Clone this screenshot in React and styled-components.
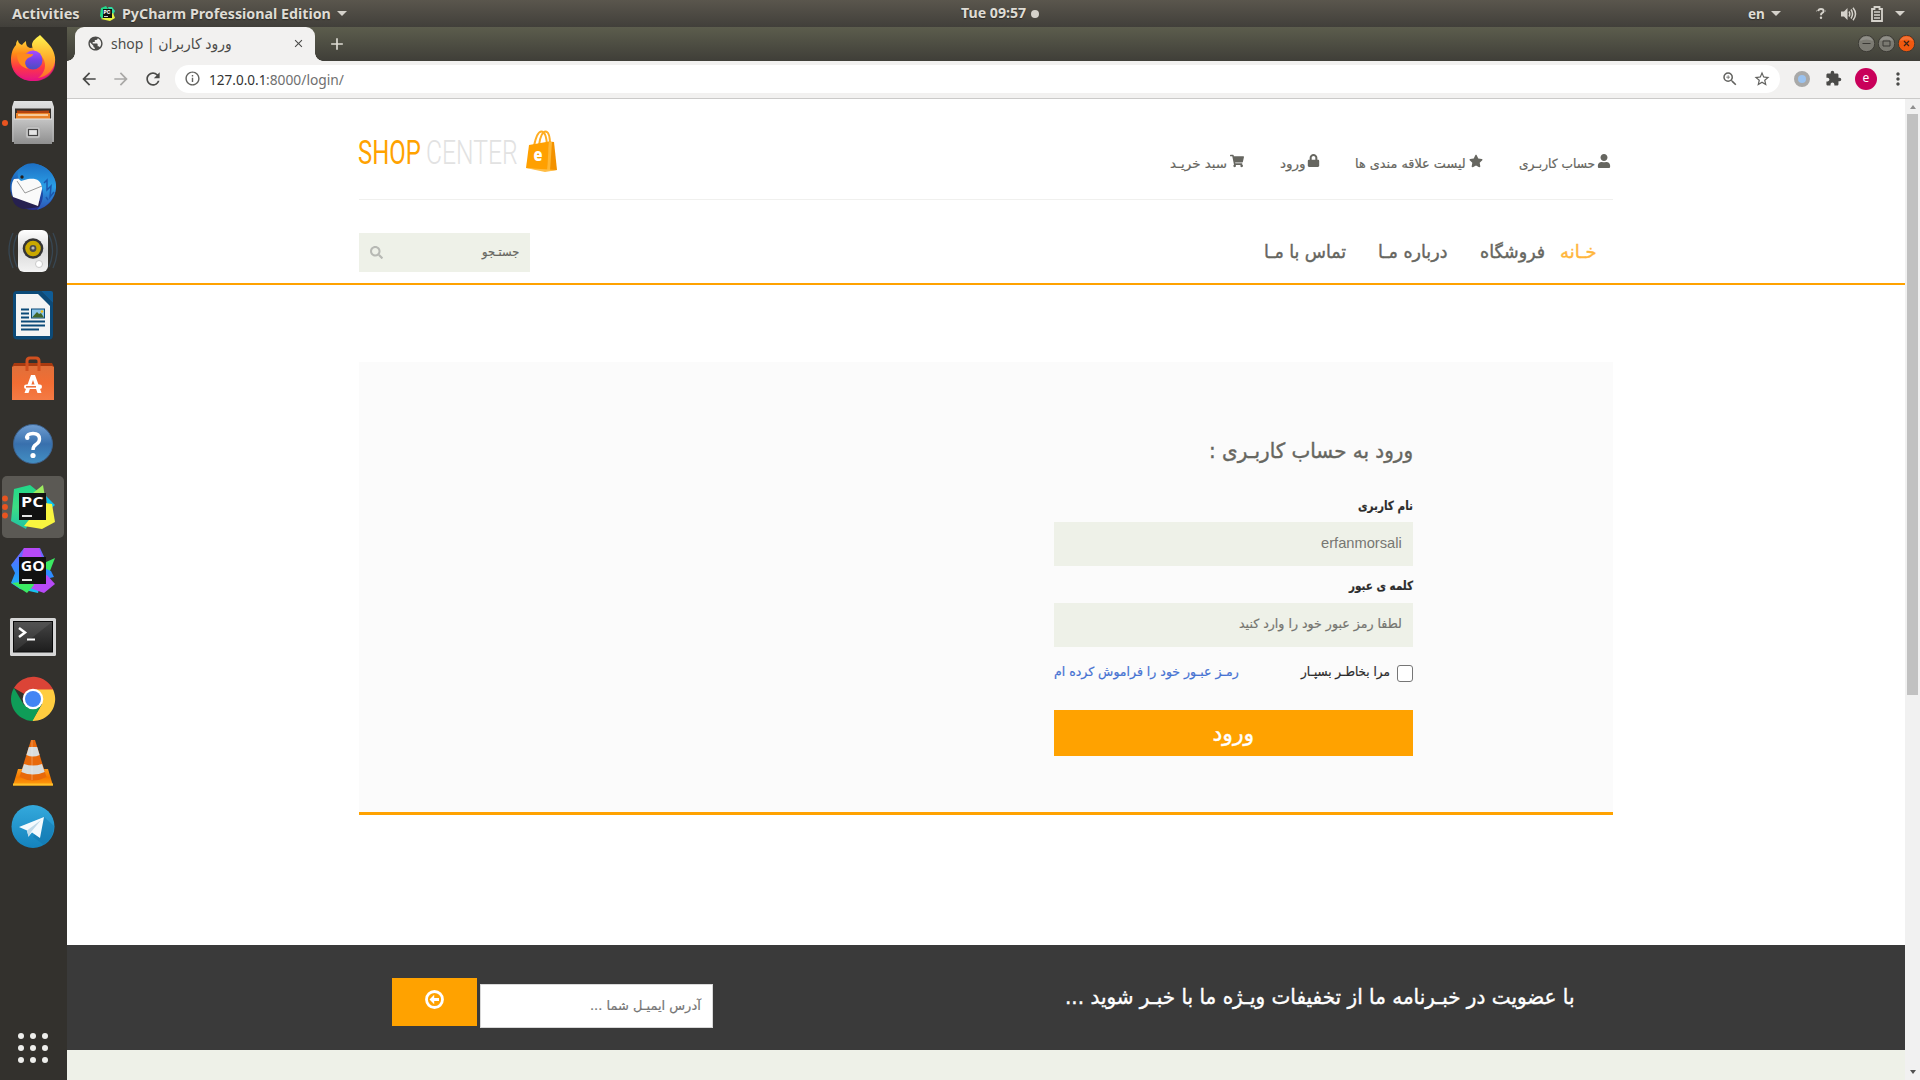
import React, { useLayoutEffect, useRef, useState } from "react";
import styled, { createGlobalStyle } from "styled-components";
import { FaUser, FaStar, FaLock, FaShoppingCart, FaSearch } from "react-icons/fa";
import { MdArrowBack, MdArrowForward, MdRefresh, MdInfoOutline, MdZoomIn, MdStarBorder, MdExtension, MdMoreVert, MdPublic, MdClose, MdAdd } from "react-icons/md";

const ORANGE = "#ffa200";
const UBUNTU = `"Noto Sans", "Open Sans", "DejaVu Sans", sans-serif`;
const PERSIAN = `"DejaVu Sans", sans-serif`;

const GlobalStyle = createGlobalStyle`
  * { box-sizing: border-box; }
  html, body { margin: 0; padding: 0; overflow: hidden; background: #fff; }
  svg { display: block; flex: none; }
`;

/* ---------- text set to a fixed measure ---------- */

const Measure = styled.span`
  display: block;
  flex: none;
  width: ${(p) => p.$w}px;
  height: ${(p) => p.$lh || 20}px;
  line-height: ${(p) => p.$lh || 20}px;
  font-family: ${(p) => p.$font || PERSIAN};
  font-size: ${(p) => p.$size}px;
  font-weight: ${(p) => p.$weight || 400};
  color: ${(p) => p.$color || "#666660"};
  direction: ltr;
  margin: ${(p) => p.$m || 0};
  text-shadow: ${(p) => p.$shadow || "none"};
  -webkit-text-stroke: ${(p) => (p.$font ? 0 : p.$size > 16 ? 0.4 : 0.2)}px currentColor;
`;
const Inner = styled.span`
  display: inline-block;
  white-space: pre;
  transform-origin: 0 50%;
  direction: ${(p) => (p.$ltr ? "ltr" : "rtl")};
`;

function Fit({ children, w, size, lh, font, weight, color, m, ltr, shadow }) {
  const ref = useRef(null);
  const [scale, setScale] = useState(1);
  useLayoutEffect(() => {
    const natural = ref.current.offsetWidth;
    if (natural) setScale(w / natural);
  }, [w, children]);
  return (
    <Measure $w={w} $size={size} $lh={lh} $font={font} $weight={weight} $color={color} $m={m} $shadow={shadow}>
      <Inner ref={ref} $ltr={ltr} style={{ transform: `scaleX(${scale})` }}>{children}</Inner>
    </Measure>
  );
}

/* ---------- desktop shell ---------- */

const Desktop = styled.div`
  width: 1920px;
  height: 1080px;
  display: flex;
  flex-direction: column;
  overflow: hidden;
`;
const TopBar = styled.div`
  height: 27px;
  flex: none;
  display: grid;
  grid-template-columns: 961px 1fr 172px;
  background: linear-gradient(#5a564d, #413f3a);
`;
const BarGroup = styled.div`
  display: flex;
  align-items: center;
  padding-left: ${(p) => p.$pl || 0}px;
`;
const Caret = styled.i`
  border: 5px solid transparent;
  border-top-color: #d5d2cb;
  border-bottom: 0;
  margin-left: ${(p) => p.$ml}px;
`;
const Dot = styled.i`
  width: 8px;
  height: 8px;
  border-radius: 50%;
  background: #d5d2cb;
  margin-left: 5px;
`;
const Workspace = styled.div`
  display: flex;
  flex: 1;
  min-height: 0;
`;
const Dock = styled.nav`
  width: 67px;
  flex: none;
  background: #33312d;
  display: flex;
  flex-direction: column;
`;
const Slot = styled.div`
  height: 64px;
  flex: none;
`;
const AppsGrid = styled.div`
  margin: auto 0 17px 18px;
  display: grid;
  grid-template-columns: repeat(3, 6px);
  gap: 6px;
`;
const GridDot = styled.i`
  width: 6px;
  height: 6px;
  border-radius: 50%;
  background: #eeeeec;
`;

/* ---------- browser ---------- */

const Browser = styled.div`
  width: 1853px;
  display: flex;
  flex-direction: column;
  background: #fff;
`;
const TabStrip = styled.div`
  height: 34px;
  flex: none;
  display: flex;
  align-items: flex-end;
  background: linear-gradient(#5c5d4d, #3f3e38);
`;
const TabFoot = styled.i`
  width: 8px;
  height: 8px;
  background: radial-gradient(circle at ${(p) => p.$at}, transparent 7.5px, #f2f1f0 8px);
`;
const Tab = styled.div`
  width: 240px;
  height: 34px;
  border-radius: 9px 9px 0 0;
  background: #f2f1f0;
  display: flex;
  align-items: center;
  padding: 0 0 1px 12px;
`;
const TabClose = styled.span`
  margin-left: 60px;
  color: #4a4a48;
  stroke: currentColor;
`;
const NewTab = styled.span`
  align-self: center;
  margin-left: 4px;
  color: #dedcd4;
`;
const WindowButtons = styled.div`
  margin-left: auto;
  align-self: center;
  display: flex;
  gap: 3px;
  padding: 0 5px 1px 0;
`;
const Toolbar = styled.div`
  height: 38px;
  flex: none;
  display: flex;
  align-items: center;
  background: #f2f1f0;
  border-bottom: 1px solid #cbcac9;
  color: #4a4a48;
  padding: 0 0 2px 12px;
`;
const Tool = styled.span`
  margin-left: ${(p) => p.$ml || 0}px;
  color: ${(p) => p.$color || "inherit"};
`;
const Omnibox = styled.div`
  margin-left: 12px;
  width: 1605px;
  height: 28px;
  border-radius: 14px;
  background: #fff;
  display: flex;
  align-items: center;
  padding-left: 9px;
  color: #62625f;
`;
const Profile = styled.span`
  width: 22px;
  height: 22px;
  border-radius: 50%;
  background: #c9005a;
  color: #fff;
  margin-left: 13px;
  display: flex;
  justify-content: center;
  font: 12px/20px ${UBUNTU};
`;
const ExtensionDot = styled.span`
  width: 16px;
  height: 16px;
  border-radius: 50%;
  border: 4px solid #a9a9a8;
  background: #9bc3f0;
  margin-left: 14px;
`;
const Viewport = styled.div`
  flex: 1;
  min-height: 0;
  display: flex;
`;
const Scrollbar = styled.div`
  width: 15px;
  background: #f1f1f1;
  display: flex;
  flex-direction: column;
  align-items: center;
  padding: 6px 0;
`;
const Thumb = styled.div`
  width: 11px;
  height: 581px;
  margin: 5px 0 auto;
  background: #c1c1c1;
`;
const ScrollArrow = styled.i`
  border: 3.5px solid transparent;
  ${(p) => (p.$up ? "border-bottom: 4px solid #8f8f8f; border-top: 0;" : "border-top: 4px solid #505050; border-bottom: 0;")}
`;

/* ---------- shop page ---------- */

const Page = styled.main`
  width: 1838px;
  display: flex;
  flex-direction: column;
  background: #fff;
`;
const Header = styled.header`
  height: 186px;
  flex: none;
  border-bottom: 2px solid ${ORANGE};
  padding: 0 292px;
`;
const HeaderTop = styled.div`
  height: 101px;
  border-bottom: 1px solid #f0f0ee;
  display: flex;
  justify-content: space-between;
`;
const Logo = styled.div`
  display: flex;
  align-items: flex-start;
  padding-top: 31px;
`;
const LinkRow = styled.div`
  display: flex;
  direction: rtl;
  padding: 55px 2px 0 0;
`;
const QuickLink = styled.a`
  display: flex;
  align-items: flex-start;
  color: #666660;
  margin-right: ${(p) => p.$gap || 0}px;
`;
const HeaderBottom = styled.div`
  display: flex;
  justify-content: space-between;
  padding-top: 33px;
`;
const Search = styled.div`
  width: 171px;
  height: 39px;
  background: #eef1e8;
  display: flex;
  align-items: center;
  justify-content: space-between;
  padding: 0 11px;
  color: #b7b9b4;
`;
const Menu = styled.nav`
  display: flex;
  direction: rtl;
  padding: 5px 16px 0 0;
`;
const Card = styled.section`
  margin: 77px 292px 0;
  height: 453px;
  flex: none;
  background: #fbfbfb;
  border-bottom: 3px solid ${ORANGE};
`;
const Form = styled.div`
  width: 359px;
  margin: 0 200px 0 auto;
  padding-top: 73px;
  display: flex;
  flex-direction: column;
  align-items: flex-start;
  direction: rtl;
`;
const Field = styled.div`
  width: 359px;
  height: 44px;
  background: #eef1e8;
  display: flex;
  align-items: center;
  padding-right: 11px;
`;
const Options = styled.div`
  width: 359px;
  height: 20px;
  margin-top: 15px;
  display: flex;
  align-items: center;
`;
const Checkbox = styled.span`
  width: 17px;
  height: 17px;
  margin: 2px 0 0 1px;
  border: 1px solid #767676;
  border-radius: 3px;
  background: #fff;
`;
const Submit = styled.div`
  width: 359px;
  height: 46px;
  margin-top: 28px;
  background: ${ORANGE};
  display: flex;
  justify-content: center;
`;
const Newsletter = styled.section`
  margin-top: 130px;
  height: 105px;
  flex: none;
  background: #3a3a3a;
  display: flex;
  padding-left: 325px;
`;
const SendButton = styled.div`
  width: 85px;
  height: 48px;
  margin-top: 33px;
  background: ${ORANGE};
  display: flex;
  justify-content: center;
  padding-top: 12px;
`;
const EmailField = styled.div`
  width: 233px;
  height: 44px;
  margin: 39px 353px 0 3px;
  background: #fff;
  border: 1px solid #d8d8d8;
  display: flex;
  direction: rtl;
  align-items: center;
  padding-right: 11px;
`;
const PageFoot = styled.div`
  flex: 1;
  background: #eef1e8;
`;

/* ---------- drawings ---------- */

const Bag = () => (
  <svg width="32" height="43" viewBox="0 0 32 43">
    <path d="M8 16 C10 6 13 1.500 15.500 1.500 C19 1.500 20.500 8 21 15 M13 15 C14 6 17 1.500 19.500 1.500 C23 1.500 24 8 24 15" fill="none" stroke="#ffad22" strokeWidth="2" />
    <path d="M3 15 L23 11.500 L22 41 L0 38Z" fill="#ffa000" />
    <path d="M23 11.500 L28 12 L31 40 L21 41Z" fill="#f39200" />
    <path d="M23 11.500 L26 12 L24 41 L21 41Z" fill="#ffb733" />
    <path d="M0 38 L22 39.500 L31 40 L19 42Z" fill="#ffbd45" />
    <text x="7.500" y="31" fontFamily="Open Sans" fontWeight="800" fontSize="18" fill="#fff" textLength="9" lengthAdjust="spacingAndGlyphs">e</text>
  </svg>
);

const CircleLeft = () => (
  <svg width="19" height="19" viewBox="0 0 19 19">
    <circle cx="9.500" cy="9.500" r="8" fill="none" stroke="#fff" strokeWidth="2.800" />
    <path d="M4.500 9.500 L9.200 4.800 V8 H14 V11 H9.200 V14.200Z" fill="#fff" />
  </svg>
);

const WinButton = ({ kind }) => (
  <svg width="17" height="17" viewBox="0 0 17 17">
    <circle cx="8.500" cy="8.500" r="8.200" fill={kind === "close" ? "#f1580f" : "#7b7a72"} stroke="#35342f" strokeWidth=".8" />
    <path d="M2 6 A7 7 0 0 1 15 6 Q8.500 3 2 6" fill="#fff" opacity=".16" />
    {kind === "min" && <path d="M4.500 8.500 H12.500" stroke="#3a3935" />}
    {kind === "max" && <path d="M5 6 H12 V11 H5Z" fill="none" stroke="#3a3935" />}
    {kind === "close" && <path d="M6 6 L11 11 M11 6 L6 11" stroke="#3a2417" strokeWidth="1.200" />}
  </svg>
);

const Volume = () => (
  <svg width="16" height="14" viewBox="0 0 16 14" fill="none" stroke="#d5d2cb" strokeWidth="1.500">
    <path d="M0 4.500 H3 L6.500 1 V13 L3 9.500 H0Z" fill="#d5d2cb" stroke="none" />
    <path d="M8 4.500 Q9.500 7 8 9.500 M10 2.500 Q13 7 10 11.500 M12 .8 Q17 7 12 13.200" />
  </svg>
);

const Battery = () => (
  <svg width="12" height="16" viewBox="0 0 12 16">
    <path d="M1 3 H3.500 V1 H8.500 V3 H11 V15 H1Z" fill="none" stroke="#d5d2cb" strokeWidth="1.800" />
    <path d="M3 6 H9 M3 9 H9 M3 12 H9" stroke="#d5d2cb" strokeWidth="1.500" />
  </svg>
);

const MiniPyCharm = () => (
  <svg width="15" height="15" viewBox="0 0 15 15">
    <path d="M1 2 L6 0 L8 3 L2 13 L0 10Z" fill="#21d789" />
    <path d="M8 1 L12 1 L15 5 L13 9 L10 7Z" fill="#2ed8a0" />
    <path d="M13 7 L15 12 L10 15 L1 13 L5 11Z" fill="#e9f53f" />
    <rect x="3" y="3" width="9" height="9" fill="#111" />
    <text x="3.600" y="7.800" fontFamily="Inter" fontWeight="800" fontSize="5" fill="#fff">PC</text>
    <path d="M4 10.500 H8" stroke="#fff" strokeWidth=".8" />
  </svg>
);

const HelpPerson = () => (
  <svg width="10" height="11" viewBox="0 0 10 11">
    <path d="M2.200 3.200 Q2.500 1 5 1 Q7.600 1 7.600 3.200 Q7.600 4.400 6 5.200 Q5 5.700 5 7.200" fill="none" stroke="#d5d2cb" strokeWidth="1.900" />
    <circle cx="5" cy="9.700" r="1.200" fill="#d5d2cb" />
    <path d="M0 3 H1 M9 3 H10" stroke="#a9a69f" />
  </svg>
);

const grad = (id, stops, vertical = true) => (
  <linearGradient id={id} x1="0" y1="0" x2={vertical ? 0 : 1} y2={vertical ? 1 : 0}>
    {stops.map((c, i) => <stop key={i} offset={i / (stops.length - 1)} stopColor={c} />)}
  </linearGradient>
);

const dockIcons = {
  firefox: (
    <>
      <defs>
        {grad("ffBody", ["#ffd43a", "#ff8a16", "#ff3647", "#e31587"])}
        {grad("ffTail", ["#fff44f", "#ffb22c", "#ff6a2a"])}
        {grad("ffCore", ["#a94dff", "#7542e5", "#4a4fc0"])}
      </defs>
      <path d="M16 18 C16 15 17 14 18 13 C18 16 20 17 22 18 C23 16 25 15 26 14 C26 18 27 20 30 21 L44 19 C49 22 55 26 55 34 C55 46 45 54 33 54 C20 54 11 45 11 33 C11 26 13 21 16 18Z" fill="url(#ffBody)" />
      <path d="M40 8 C44 12 48 16 51 20 C55 26 57 34 53 42 C50 48 44 51 38 51 C45 46 47 38 43 31 C39 26 32 24 32 18 C32 14 36 11 40 8Z" fill="url(#ffTail)" />
      <circle cx="33" cy="33" r="9.500" fill="url(#ffCore)" />
      <path d="M17 27 C23 24 27 28 33 27 C33 30 29 30 27 32 C24 35 25 38 28 42 C20 40 17 34 17 27Z" fill="#ff8a1c" />
      <path d="M12 38 C16 50 28 54 38 51 C48 49 54 42 55 35 C56 46 45 55 33 54 C22 54 14 48 12 38Z" fill="#e8147c" opacity=".65" />
    </>
  ),
  files: (
    <>
      <defs>{grad("fileFront", ["#c4c4c4", "#8f8f8f"])}{grad("fileTop", ["#e2e2e2", "#a2a2a2"])}</defs>
      <circle cx="5" cy="32" r="3" fill="#e95420" />
      <path d="M14 10 H52 L54 16 V51 H12 V16Z" fill="url(#fileTop)" />
      <rect x="15" y="17.500" width="36" height="11" fill="#36312d" />
      <path d="M17 19.500 L32 20 L49 19.500 V22 H17Z" fill="#b5430f" />
      <path d="M16 22 H50 V28 H16Z" fill="#e9822a" />
      <path d="M18 24 H48" stroke="#fff0d8" strokeWidth="1.300" />
      <rect x="14" y="28" width="38" height="25" fill="url(#fileFront)" />
      <path d="M14 28 H52" stroke="#e8e8e8" />
      <rect x="26" y="36" width="14" height="11" rx="2" fill="#c9c9c9" stroke="#aaa" strokeWidth=".6" />
      <rect x="28.500" y="38.500" width="9" height="6" fill="#e5e5e5" stroke="#444" strokeWidth="1.200" />
    </>
  ),
  thunderbird: (
    <>
      <defs>{grad("tb", ["#2b8ad8", "#1557b0", "#2a2f8f"])}{grad("tbWing", ["#1d6fc4", "#2a9fe6", "#2d53b5"])}</defs>
      <circle cx="33" cy="32" r="23" fill="url(#tb)" />
      <path d="M12 41 C12 48 17 53 24 54 L40 52 L40 46Z" fill="#262050" />
      <path d="M14 24 L40 22 L43 30 L38 51 L13 42 C11 35 11 28 14 24Z" fill="#fafafa" />
      <path d="M18 17 C22 9 31 6 40 10 C50 14 57 23 56 33 C55 43 48 52 37 55 C43 48 44 40 42 33 C41 24 35 23 28 24 L21 26 C18 24 17 21 18 17Z" fill="url(#tbWing)" />
      <path d="M17 26 L25 38 L42 31" fill="none" stroke="#999" strokeWidth="1" />
      <path d="M44 28 L47 25 L47 35 L51 31 L50 42 L54 37 M46 42 L48 45" stroke="#1c58ae" strokeWidth="1.500" fill="none" />
      <circle cx="22" cy="22" r="1.700" fill="#271e19" />
    </>
  ),
  rhythmbox: (
    <>
      <defs>{grad("rb", ["#ffffff", "#dadada", "#f3f3f3"])}</defs>
      <g fill="none" stroke="#384753" strokeWidth="1.300">
        <path d="M17 16 Q10 31 17 48 M13 14 Q5 31 13 49 M49 16 Q56 31 49 48 M53 14 Q61 31 53 49" />
      </g>
      <rect x="18" y="11" width="30" height="42" rx="6" fill="url(#rb)" />
      <circle cx="33" cy="29.500" r="10.300" fill="#343434" />
      <circle cx="33" cy="29.500" r="7.800" fill="#c9a800" />
      <circle cx="33" cy="29.500" r="3.400" fill="#4b4b4b" />
      <circle cx="33" cy="29" r="1.600" fill="#bbb" />
      <circle cx="39" cy="45" r="3.500" fill="#fff" stroke="#c9c9c9" />
    </>
  ),
  writer: (
    <>
      <path d="M17 8 H41 L53 20 V52 Q53 56.500 49 56.500 H18 Q13 56.500 13 52 V12 Q13 8 17 8Z" fill="#0c4a78" />
      <path d="M16 11 H38 L50 23 V53 H16Z" fill="#f4f4f4" />
      <path d="M41 8 H51 Q53 8 53 10 V20Z" fill="#0f5c96" />
      <path d="M21 26.500 H29 M21 30.500 H29 M21 34.500 H29 M21 38.500 H45 M21 42.500 H45 M21 46.500 H39" stroke="#0c4a78" strokeWidth="1.900" />
      <rect x="31.500" y="26" width="13" height="9" fill="#8bc4e8" stroke="#0c4a78" />
      <path d="M32 34.500 L37 29 L39 31 L41 30 L44 34.500Z" fill="#41662a" />
      <circle cx="42" cy="28.500" r="1.300" fill="#f5c211" />
    </>
  ),
  software: (
    <>
      <defs>{grad("sw", ["#e0703a", "#f26d33", "#f47b45"])}</defs>
      <path d="M14 16 H52 L54 20 H12Z" fill="#a83a10" />
      <path d="M12 20 L14 19 H52 L54 20 V53 H12Z" fill="url(#sw)" />
      <path d="M27 24 V14 Q27 11 30 11 H36 Q39 11 39 14 V24" fill="none" stroke="#d1501f" strokeWidth="3" />
      <path d="M24.500 46 L31 28 H35 L41.500 46 H37.500 L33 33 L28.500 46Z" fill="#fff" />
      <rect x="24" y="37.500" width="18" height="4.500" rx="2.200" fill="#fff" />
      <path d="M26 39.800 H36" stroke="#ed6b33" strokeWidth="1.500" />
    </>
  ),
  help: (
    <>
      <defs>{grad("hp", ["#6f9dd1", "#3870ad", "#4390c4"])}</defs>
      <circle cx="33" cy="33" r="19.500" fill="url(#hp)" stroke="#3d618c" strokeWidth="1" />
      <path d="M26.500 27 Q27 22.500 33 22.500 Q39.500 22.500 39.500 28 Q39.500 31.500 36 33.500 Q33 35.500 33 39" fill="none" stroke="#fff" strokeWidth="3.400" />
      <circle cx="27.300" cy="26.800" r="2.200" fill="#fff" />
      <circle cx="33" cy="44.500" r="2.600" fill="#fff" />
    </>
  ),
  pycharm: (
    <>
      <defs>{grad("pcg", ["#21d789", "#3ddc84", "#1fc2a5"])}</defs>
      <rect x="2" y="1" width="62" height="62" rx="5" fill="#5b5954" />
      <g fill="#e95420"><circle cx="5" cy="23.500" r="2.900" /><circle cx="5" cy="32" r="2.900" /><circle cx="5" cy="40.500" r="2.900" /></g>
      <path d="M14 14 L30 10 L40 18 L26 54 L11 46Z" fill="url(#pcg)" />
      <path d="M33 18 L43 10 L45 22Z" fill="#9dec60" />
      <path d="M46 21 L55 30 L48 36Z" fill="#07c3f2" />
      <path d="M45 28 L52 29 L55 47 L42 54 L24 51 L33 40Z" fill="#f8f540" />
      <rect x="19" y="18" width="27" height="27" fill="#111" />
      <text x="21" y="32" fontFamily="Open Sans" fontWeight="700" fontSize="15" fill="#fff" textLength="22.500" lengthAdjust="spacingAndGlyphs">PC</text>
      <path d="M22 41 H32" stroke="#fff" strokeWidth="1.800" />
    </>
  ),
  goland: (
    <>
      <defs>{grad("gog", ["#7d5cff", "#2e8bff", "#16c7ee"])}</defs>
      <path d="M24 9 L40 9 L46 22 L38 54 L20 50 L11 44 L15 34 L11 26Z" fill="url(#gog)" />
      <path d="M24 9 H39 L43 22 H21Z" fill="#b74af7" />
      <path d="M55 19 L48 37 L44 24Z" fill="#3bea62" />
      <path d="M46 30 L51 32 L54 38 L46 40Z" fill="#2e8bff" />
      <path d="M47 36 L55 45 L44 54 L30 49 L34 42Z" fill="#b74af7" />
      <path d="M12 44 L32 42 L34 46 L27 54Z" fill="#3bea62" />
      <rect x="19" y="18" width="27" height="27" fill="#111" />
      <text x="20.800" y="32" fontFamily="Open Sans" fontWeight="700" fontSize="15" fill="#fff" textLength="24" lengthAdjust="spacingAndGlyphs">GO</text>
      <path d="M22 41 H32" stroke="#fff" strokeWidth="1.800" />
    </>
  ),
  terminal: (
    <>
      <defs>{grad("tm", ["#454545", "#1d1d1d"])}</defs>
      <rect x="10" y="15" width="46" height="38" rx="1.500" fill="#d6d6d6" />
      <rect x="13.500" y="18.500" width="39" height="30.500" fill="url(#tm)" stroke="#0a0a0a" />
      <path d="M14 49 L52 19 V19 H14Z" fill="#fff" opacity=".08" />
      <path d="M19 25 L25 29.500 L19 34" fill="none" stroke="#fff" strokeWidth="2.500" />
      <path d="M27 36.500 H35" stroke="#fff" strokeWidth="2" />
    </>
  ),
  chrome: (
    <>
      <path d="M33 32 L13.950 21 A22 22 0 0 1 53.500 23.500 H33Z" fill="#db4437" />
      <path d="M33 22.500 H53 A22 22 0 0 1 32 54 L42 37Z" fill="#ffcd40" />
      <path d="M13.950 21 A22 22 0 0 0 32.500 54 L41.500 37.500 L33 36 L24 38Z" fill="#0f9d58" />
      <circle cx="33" cy="32" r="10.300" fill="#fff" />
      <circle cx="33" cy="32" r="8" fill="#4285f4" />
    </>
  ),
  vlc: (
    <>
      <defs>{grad("vl", ["#ff9a1a", "#f57900", "#ff9f12"])}</defs>
      <path d="M18 38 H48 L53 54.500 H13Z" fill="url(#vl)" />
      <path d="M31 9 H35 L46.500 46 Q33 53 19.500 46Z" fill="#e8690b" />
      <path d="M28.800 16 H37.200 L39.600 24 Q33 27 26.400 24Z" fill="#d9dcdc" />
      <path d="M24 33 Q33 36 42 33 L44.700 41 Q33 46 21.300 41Z" fill="#d9dcdc" />
      <path d="M31 9 H33 V49 H31Z" fill="#fff" opacity=".15" />
      <path d="M13 53.500 H53" stroke="#ffc02a" strokeWidth="2" />
    </>
  ),
  telegram: (
    <>
      <defs>{grad("tg", ["#34a9dc", "#1482bd"])}</defs>
      <circle cx="33" cy="31.500" r="21.500" fill="url(#tg)" />
      <path d="M44 22 L54 31 Q54 42 44 50 L33 42Z" fill="#0f6da3" opacity=".35" />
      <path d="M19 32 L44 22 L40 43 L32 37.500 L28.500 41.500 L27 35.500Z" fill="#f4fafd" />
      <path d="M27 35.500 L41 25 L31 37 L28.500 42Z" fill="#bfd9e8" />
    </>
  ),
};

const links = [
  { label: "حساب کاربـری", w: 76, Icon: FaUser, size: 14, gap: 0, sp: 2, after: 1 },
  { label: "لیست علاقه مندی ها", w: 111, Icon: FaStar, size: 14, gap: 35, sp: 3 },
  { label: "ورود", w: 26, Icon: FaLock, size: 13, gap: 35, sp: 1 },
  { label: "سبد خریـد", w: 57, Icon: FaShoppingCart, size: 14, gap: 36, sp: 3, after: 1 },
];

const menu = [
  { label: "خـانه", w: 37, gap: 0, color: "#ffb63b" },
  { label: "فروشگاه", w: 65, gap: 15 },
  { label: "درباره مـا", w: 69, gap: 33 },
  { label: "تماس با مـا", w: 82, gap: 32 },
];

const barText = { font: UBUNTU, weight: 700, color: "#dfdcd5", ltr: true, shadow: "0 1px 1px #2b2a27" };

export default function App() {
  return (
    <Desktop>
      <GlobalStyle />
      <TopBar>
        <BarGroup $pl={12}>
          <Fit {...barText} w={68} size={13.5}>Activities</Fit>
          <Tool $ml={20}><MiniPyCharm /></Tool>
          <Fit {...barText} w={209} size={13.5} m="0 0 0 7px">PyCharm Professional Edition</Fit>
          <Caret $ml={6} />
        </BarGroup>
        <BarGroup>
          <Fit {...barText} w={65} size={13.5} m="0 0 1px">Tue 09:57</Fit>
          <Dot />
        </BarGroup>
        <BarGroup>
          <Fit {...barText} w={17} size={13.5}>en</Fit>
          <Caret $ml={6} />
          <Tool $ml={35}><HelpPerson /></Tool>
          <Tool $ml={15}><Volume /></Tool>
          <Tool $ml={14}><Battery /></Tool>
          <Caret $ml={12} />
        </BarGroup>
      </TopBar>
      <Workspace>
        <Dock>
          {Object.entries(dockIcons).map(([name, art]) => (
            <Slot key={name}>
              <svg width="67" height="64" viewBox="0 0 67 64">{art}</svg>
            </Slot>
          ))}
          <AppsGrid>{Array.from({ length: 9 }, (_, i) => <GridDot key={i} />)}</AppsGrid>
        </Dock>
        <Browser>
          <TabStrip>
            <TabFoot $at="0 0" />
            <Tab>
              <MdPublic size={17} color="#4b4b49" />
              <Fit w={121} size={15} font={UBUNTU} color="#4c4c4a" ltr m="0 0 1px 7px">shop | ورود کاربران</Fit>
              <TabClose><MdClose size={13} /></TabClose>
            </Tab>
            <TabFoot $at="100% 0" />
            <NewTab><MdAdd size={20} /></NewTab>
            <WindowButtons>
              <WinButton kind="min" /><WinButton kind="max" /><WinButton kind="close" />
            </WindowButtons>
          </TabStrip>
          <Toolbar>
            <Tool><MdArrowBack size={20} /></Tool>
            <Tool $ml={12} $color="#a9a8a6"><MdArrowForward size={20} /></Tool>
            <Tool $ml={12}><MdRefresh size={20} /></Tool>
            <Omnibox>
              <MdInfoOutline size={17} />
              <Fit w={57} size={14.5} font={UBUNTU} color="#333" ltr m="0 0 0 8px">127.0.0.1</Fit>
              <Fit w={78} size={14.5} font={UBUNTU} color="#6f6f6f" ltr>:8000/login/</Fit>
              <Tool $ml={1377}><MdZoomIn size={18} /></Tool>
              <Tool $ml={14}><MdStarBorder size={18} /></Tool>
            </Omnibox>
            <ExtensionDot />
            <Tool $ml={15}><MdExtension size={17} /></Tool>
            <Profile>e</Profile>
            <Tool $ml={11}><MdMoreVert size={20} /></Tool>
          </Toolbar>
          <Viewport>
            <Page>
              <Header>
                <HeaderTop>
                  <Logo>
                    <Fit w={63} size={33} lh={44} font="Roboto, sans-serif" color={ORANGE} ltr weight={400} m="1px 5px 0 -1px">SHOP</Fit>
                    <Fit w={92} size={33} lh={44} font="Roboto, sans-serif" color="#e2e2e2" ltr weight={300} m="1px 8px 0 0">CENTER</Fit>
                    <Bag />
                  </Logo>
                  <LinkRow>
                    {links.map(({ label, w, Icon, size, gap, sp, after = 0 }) => (
                      <QuickLink key={label} $gap={gap}>
                        <Icon size={size} />
                        <Fit w={w} size={12.5} m={`0 ${sp}px 0 ${after}px`}>{label}</Fit>
                      </QuickLink>
                    ))}
                  </LinkRow>
                </HeaderTop>
                <HeaderBottom>
                  <Search>
                    <Tool $ml={0}><FaSearch size={13} /></Tool>
                    <Fit w={37} size={12} lh={16} m="0 0 2px">جستـجو</Fit>
                  </Search>
                  <Menu>
                    {menu.map(({ label, w, gap, color }) => (
                      <Fit key={label} w={w} size={18} lh={28} color={color} m={`0 ${gap}px 0 0`}>{label}</Fit>
                    ))}
                  </Menu>
                </HeaderBottom>
              </Header>
              <Card>
                <Form>
                  <Fit w={204} size={21} lh={32}>ورود به حساب کاربـری :</Fit>
                  <Fit w={55} size={12.5} weight={700} color="#2b2b2b" m="29px 0 6px">نام کاربری</Fit>
                  <Field><Fit w={81} size={14.5} font={`"Liberation Sans", sans-serif`} color="#777772" ltr m="0 0 2px">erfanmorsali</Fit></Field>
                  <Fit w={64} size={12.5} weight={700} color="#2b2b2b" m="10px 0 7px">کلمه ی عبور</Fit>
                  <Field><Fit w={163} size={12.5} color="#757570" m="0 0 2px">لطفا رمز عبور خود را وارد کنید</Fit></Field>
                  <Options>
                    <Checkbox />
                    <Fit w={89} size={12.5} color="#2b2b2b" m="0 6px 0 62px">مرا بخاطـر بسپـار</Fit>
                    <Fit w={185} size={12.5} color="#4672d2" m="0 0 1px">رمـز عبـور خود را فراموش کرده ام</Fit>
                  </Options>
                  <Submit><Fit w={42} size={22} lh={44} color="#fff" m="2px 0 0">ورود</Fit></Submit>
                </Form>
              </Card>
              <Newsletter>
                <SendButton><CircleLeft /></SendButton>
                <EmailField><Fit w={111} size={12.5} color="#757575" m="0 0 1px">آدرس ایمیـل شما ...</Fit></EmailField>
                <Fit w={510} size={21} lh={34} color="#fff" m="35px 0 0 -1px">با عضویت در خبـرنامه ما از تخفیفات ویـژه ما با خبـر شوید ...</Fit>
              </Newsletter>
              <PageFoot />
            </Page>
            <Scrollbar><ScrollArrow $up /><Thumb /><ScrollArrow /></Scrollbar>
          </Viewport>
        </Browser>
      </Workspace>
    </Desktop>
  );
}
